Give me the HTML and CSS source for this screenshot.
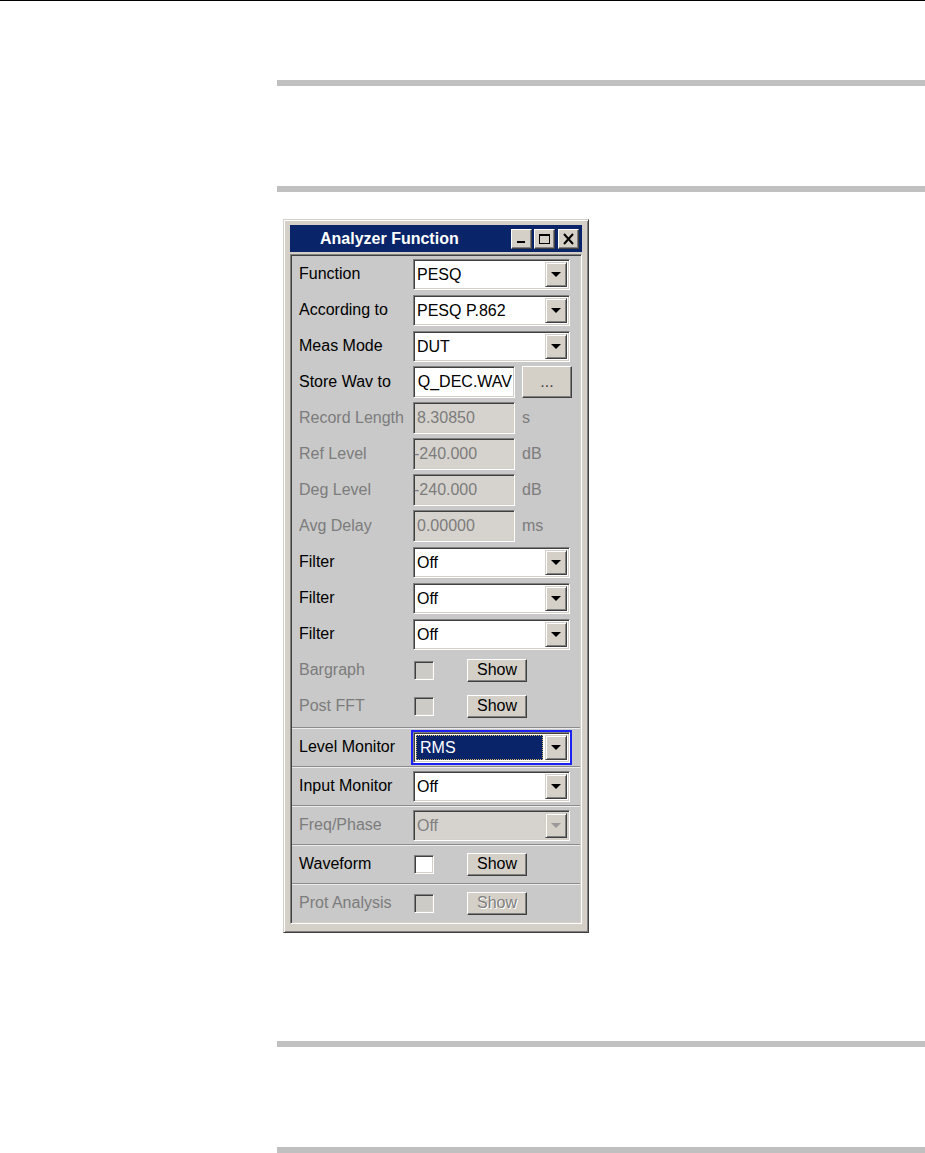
FILE: index.html
```html
<!DOCTYPE html>
<html lang="en">
<head>
  <meta charset="UTF-8">
  <meta name="viewport" content="width=device-width, initial-scale=1.0">
  <title>Analyzer Function</title>
  <link rel="stylesheet" href="styles.css">
</head>
<body>
  <div class="page-rule"></div>
  <div class="doc">
    <div class="bar"></div>
    <div class="bar bar-gap"></div>

    <div class="window">
      <div class="titlebar">
        <span class="title">Analyzer Function</span>
        <div class="caption-btns">
          <span class="cap-btn"><svg width="11" height="10" viewBox="0 0 11 10"><rect x="1" y="7" width="8" height="2" fill="#000"/></svg></span>
          <span class="cap-btn"><svg width="13" height="12" viewBox="0 0 13 12"><rect x="1.5" y="1.5" width="10" height="9" fill="none" stroke="#000"/><rect x="1" y="1" width="11" height="2" fill="#000"/></svg></span>
          <span class="cap-btn close"><svg width="13" height="12" viewBox="0 0 13 12"><path d="M2 1 L11 11 M11 1 L2 11" stroke="#000" stroke-width="2"/></svg></span>
        </div>
      </div>

      <div class="panel">
        <div class="group main">
          <div class="row">
            <span class="lbl">Function</span>
            <div class="combo"><span class="val">PESQ</span><span class="drop"></span></div>
          </div>
          <div class="row">
            <span class="lbl">According to</span>
            <div class="combo"><span class="val">PESQ P.862</span><span class="drop"></span></div>
          </div>
          <div class="row">
            <span class="lbl">Meas Mode</span>
            <div class="combo"><span class="val">DUT</span><span class="drop"></span></div>
          </div>
          <div class="row">
            <span class="lbl">Store Wav to</span>
            <div class="pair">
              <div class="edit store"><span>Q_DEC.WAV</span></div>
              <span class="btn dots">...</span>
            </div>
          </div>
          <div class="row">
            <span class="lbl off">Record Length</span>
            <div class="pair">
              <div class="edit off"><span>8.30850</span></div>
              <span class="unit">s</span>
            </div>
          </div>
          <div class="row">
            <span class="lbl off">Ref Level</span>
            <div class="pair">
              <div class="edit off neg"><span>-240.000</span></div>
              <span class="unit">dB</span>
            </div>
          </div>
          <div class="row">
            <span class="lbl off">Deg Level</span>
            <div class="pair">
              <div class="edit off neg"><span>-240.000</span></div>
              <span class="unit">dB</span>
            </div>
          </div>
          <div class="row">
            <span class="lbl off">Avg Delay</span>
            <div class="pair">
              <div class="edit off"><span>0.00000</span></div>
              <span class="unit">ms</span>
            </div>
          </div>
          <div class="row">
            <span class="lbl">Filter</span>
            <div class="combo"><span class="val">Off</span><span class="drop"></span></div>
          </div>
          <div class="row">
            <span class="lbl">Filter</span>
            <div class="combo"><span class="val">Off</span><span class="drop"></span></div>
          </div>
          <div class="row">
            <span class="lbl">Filter</span>
            <div class="combo"><span class="val">Off</span><span class="drop"></span></div>
          </div>
          <div class="row">
            <span class="lbl off">Bargraph</span>
            <div class="pair">
              <span class="check"></span>
              <span class="btn show">Show</span>
            </div>
          </div>
          <div class="row">
            <span class="lbl off">Post FFT</span>
            <div class="pair">
              <span class="check"></span>
              <span class="btn show">Show</span>
            </div>
          </div>
        </div>

        <div class="group single">
          <div class="row">
            <span class="lbl">Level Monitor</span>
            <div class="combo focus"><span class="val sel">RMS</span><span class="drop"></span></div>
          </div>
        </div>
        <div class="group single">
          <div class="row">
            <span class="lbl">Input Monitor</span>
            <div class="combo"><span class="val">Off</span><span class="drop"></span></div>
          </div>
        </div>
        <div class="group single">
          <div class="row">
            <span class="lbl off">Freq/Phase</span>
            <div class="combo off"><span class="val">Off</span><span class="drop"></span></div>
          </div>
        </div>
        <div class="group single">
          <div class="row">
            <span class="lbl">Waveform</span>
            <div class="pair">
              <span class="check on"></span>
              <span class="btn show">Show</span>
            </div>
          </div>
        </div>
        <div class="group single">
          <div class="row">
            <span class="lbl off">Prot Analysis</span>
            <div class="pair">
              <span class="check"></span>
              <span class="btn show off">Show</span>
            </div>
          </div>
        </div>
      </div>
    </div>

    <div class="bar bar-low"></div>
    <div class="bar bar-gap"></div>
  </div>
</body>
</html>
```

FILE: styles.css
```css
body {
  margin: 0;
  background: #fff;
  font-family: "Liberation Sans", Arial, sans-serif;
  font-size: 16px;
  color: #000;
}
.page-rule {
  height: 1px;
  background: #000;
}
.doc {
  margin-left: 277px;
}
.bar {
  height: 6px;
  background: #c0c0c0;
  margin-top: 79px;
}
.bar-gap {
  margin-top: 100px;
}
.bar-low {
  margin-top: 108px;
}

/* window frame */
.window {
  box-sizing: border-box;
  width: 306px;
  margin: 27px 0 0 6px;
  padding: 5px 6px 8px;
  background: #d4d0c8;
  border: 1px solid;
  border-color: #d4d0c8 #404040 #404040 #d4d0c8;
  box-shadow: inset 1px 1px 0 #fff, inset -1px -1px 0 #808080;
}
.titlebar {
  height: 27px;
  background: #0a246a;
  display: flex;
  align-items: center;
  padding: 0 3px 0 30px;
}
.title {
  flex: 1;
  color: #fff;
  font-weight: bold;
  font-size: 16px;
}
.caption-btns {
  display: flex;
}
.cap-btn {
  box-sizing: border-box;
  width: 21px;
  height: 20px;
  background: #d4d0c8;
  border: 1px solid;
  border-color: #fff #404040 #404040 #fff;
  box-shadow: inset -1px -1px 0 #808080;
  display: flex;
  align-items: center;
  justify-content: center;
}
.cap-btn + .cap-btn {
  margin-left: 2px;
}
.cap-btn.close {
  margin-left: 3px;
}

/* panel */
.panel {
  margin-top: 2px;
  background: #c9c9c9;
  border: 1px solid;
  border-color: #808080 #fff #fff #808080;
  box-shadow: inset 1px 1px 0 #404040, inset -1px -1px 0 #d4d0c8;
  padding: 1px;
}
.group {
  padding-left: 7px;
}
.group.main {
  padding-bottom: 3px;
}
.group.single {
  border-top: 1px solid #8c8c8c;
  box-shadow: inset 0 1px 0 #ececec;
}
.row {
  display: grid;
  grid-template-columns: 114px auto;
  align-items: center;
  height: 36px;
}
.single .row {
  height: 38px;
}
.lbl {
  white-space: nowrap;
}
.lbl.off {
  color: #7c7c7c;
}

/* sunken fields */
.combo,
.edit,
.check {
  box-sizing: border-box;
  border: 1px solid;
  border-color: #808080 #fff #fff #808080;
  box-shadow: inset 1px 1px 0 #404040, inset -1px -1px 0 #d4d0c8;
}
.combo {
  width: 157px;
  height: 31px;
  display: flex;
  padding: 2px;
  background: #fff;
}
.val {
  flex: 1;
  padding-left: 1px;
  line-height: 25px;
  white-space: nowrap;
}
.drop {
  box-sizing: border-box;
  width: 22px;
  background: #d4d0c8;
  border: 1px solid;
  border-color: #d4d0c8 #404040 #404040 #d4d0c8;
  box-shadow: inset 1px 1px 0 #fff, inset -1px -1px 0 #808080;
  display: flex;
  align-items: center;
  justify-content: center;
}
.drop::after {
  content: "";
  border-top: 5px solid #000;
  border-left: 5px solid transparent;
  border-right: 5px solid transparent;
  margin-top: 1px;
}
.combo.focus {
  outline: 2px solid #1c22f4;
  outline-offset: 0;
}
.val.sel {
  background: #0a246a;
  color: #fff;
  outline: 1px dotted #c9b46a;
  outline-offset: -1px;
  margin-right: 2px;
  padding-left: 4px;
}
.combo.off {
  background: #d6d3ce;
  color: #808080;
}
.combo.off .drop::after {
  border-top-color: #9a9a9a;
}

.pair {
  display: flex;
  align-items: center;
}
.edit {
  width: 102px;
  height: 32px;
  display: flex;
  align-items: center;
  overflow: hidden;
  white-space: nowrap;
  padding: 0 3px;
  background: #fff;
}
.edit.store {
  justify-content: flex-end;
  padding: 0 2px 0 1px;
}
.edit.off {
  background: #d6d3ce;
  color: #7c7c7c;
}
.edit.neg {
  padding-left: 0;
}
.unit {
  margin-left: 7px;
  color: #7c7c7c;
}

/* raised buttons */
.btn {
  box-sizing: border-box;
  display: flex;
  align-items: center;
  justify-content: center;
  background: #d4d0c8;
  border: 1px solid;
  border-color: #fff #404040 #404040 #fff;
  box-shadow: inset -1px -1px 0 #808080;
}
.btn.dots {
  width: 50px;
  height: 32px;
  margin-left: 7px;
  color: #444;
}
.btn.show {
  width: 60px;
  height: 23px;
  margin-left: 33px;
}
.btn.show.off {
  color: #808080;
  text-shadow: 1px 1px 0 #fff;
}
.check {
  width: 20px;
  height: 19px;
  margin-left: 1px;
  background: #cdcbc6;
}
.check.on {
  background: #fff;
}
```
